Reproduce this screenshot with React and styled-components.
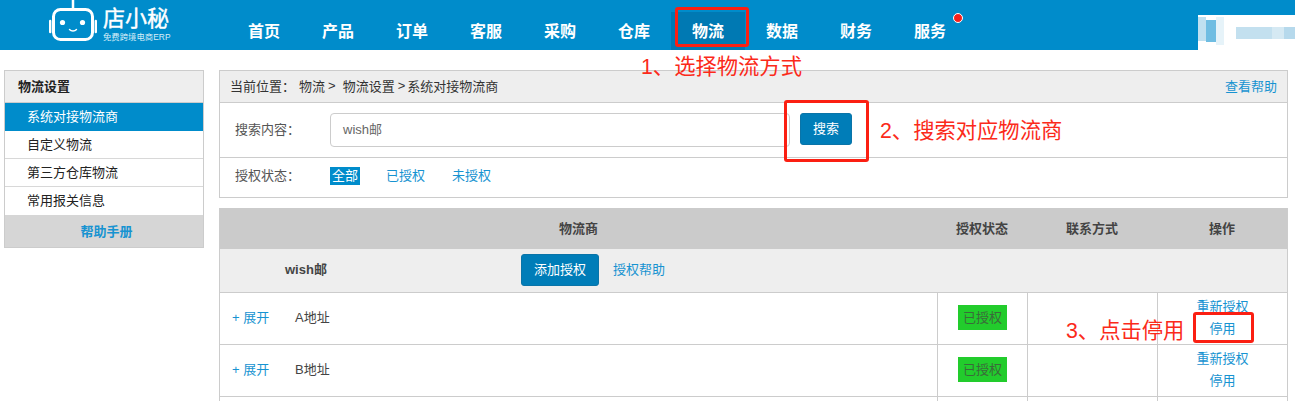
import React from "react";
import styled, { createGlobalStyle } from "styled-components";

const Global = createGlobalStyle`
  html, body { margin: 0; padding: 0; background: #fff; }
  body {
    width: 1295px; height: 401px; overflow: hidden; position: relative;
    font-family: "Liberation Sans", "Noto Sans CJK SC", sans-serif;
    font-size: 13px; color: #444;
  }
  * { box-sizing: border-box; }
`;

const BLUE = "#008ccb";
const LINK = "#1793d1";
const LINE = "#cccccc";

const Page = styled.div`position: relative; width: 1295px; height: 401px; overflow: hidden;`;

const Header = styled.header`
  height: 50px; background: ${BLUE}; display: flex; align-items: flex-end; position: relative;
`;
const Logo = styled.div`
  width: 227px; height: 50px; padding-left: 49px; display: flex; gap: 6px; flex-shrink: 0;
`;
const LogoText = styled.div`display: flex; flex-direction: column; color: #fff; width: 70px;`;
const LogoName = styled.span`
  font-size: 22px; font-weight: 400; line-height: 24px; margin-top: 7px; white-space: nowrap;
  -webkit-text-stroke: 0.4px #fff;
`;
const LogoSub = styled.span`font-size: 8.4px; line-height: 10px; margin-top: 1px; white-space: nowrap; color: #d8eef8;`;

const Nav = styled.nav`display: flex; height: 38px;`;
const NavItem = styled.a`
  width: 74px; height: 38px; display: flex; align-items: center; justify-content: center; padding-bottom: 3px;
  color: #fff; font-size: 16px; font-weight: 700; position: relative;
  background: ${p => (p.$active ? "#0079b3" : "transparent")};
`;
const Dot = styled.i`
  position: absolute; width: 10px; height: 10px; border-radius: 50%; background: #f5201c;
  border: 1px solid #fff; top: 1px; left: 60px;
`;
const UserBox = styled.div`
  position: absolute; left: 1198px; top: 15px; width: 97px; height: 35px; background: #fff; overflow: hidden;
`;
const Blur = styled.i`
  position: absolute; display: block; left: ${p => p.$x}px; top: ${p => p.$y}px;
  width: ${p => p.$w}px; height: ${p => p.$h}px; background: ${p => p.$c};
`;

const Body = styled.main`display: flex; align-items: flex-start; gap: 15px; padding: 20px 7px 0 4px;`;

const Side = styled.aside`width: 200px; border: 1px solid ${LINE}; flex-shrink: 0;`;
const SideTitle = styled.div`
  height: 32px; background: #eee; border-bottom: 1px solid ${LINE}; padding: 0 0 3px 13px;
  display: flex; align-items: center; font-weight: 700; color: #222;
`;
const SideItem = styled.div`
  height: 28px; padding: 0 0 3px 22px; display: flex; align-items: center;
  color: ${p => (p.$active ? "#fff" : "#222")};
  background: ${p => (p.$active ? BLUE : "#fff")};
  border-bottom: ${p => (p.$last || p.$active ? "none" : "1px solid #d8d8d8")};
`;
const SideHelp = styled.div`
  height: 32px; background: #d6d6d6; color: ${LINK}; font-weight: 700;
  display: flex; align-items: center; justify-content: center; padding: 0 0 2px 5px;
`;

const Content = styled.section`width: 1069px; display: flex; flex-direction: column; gap: 10px;`;
const Panel = styled.div`border: 1px solid ${LINE};`;
const Crumbs = styled.div`
  height: 32px; background: #eee; border-bottom: 1px solid ${LINE};
  display: flex; align-items: center; justify-content: space-between; padding: 0 10px 2px 10px; color: #333;
`;
const Trail = styled.div`display: flex; align-items: center;`;
const Gap = styled.span`margin-right: ${p => p.$r}px;`;
const Link = styled.a`color: ${LINK};`;
const SearchRow = styled.div`
  height: 55px; display: flex; align-items: center; border-bottom: 1px solid ${LINE}; padding-left: 15px;
`;
const Label = styled.span`width: 95px; color: #555; flex-shrink: 0; margin-bottom: 3px;`;
const Input = styled.div`
  width: 460px; height: 34px; border: 1px solid ${LINE}; border-radius: 4px; margin-right: 10px;
  display: flex; align-items: center; padding: 0 0 3px 12px; color: #666;
`;
const Button = styled.button`
  height: ${p => p.$h}px; width: ${p => p.$w}px; background: #007db8; border: 1px solid #0a74a8;
  border-radius: 3px; color: #fff; font: inherit; padding: 0 0 3px; margin-top: ${p => p.$up || 0}px;
`;
const StatusRow = styled.div`height: 39px; display: flex; align-items: center; padding: 0 0 3px 15px;`;
const Filter = styled.a`
  margin-right: ${p => p.$r}px; color: ${p => (p.$on ? "#fff" : LINK)};
  background: ${p => (p.$on ? BLUE : "transparent")}; padding: 0 ${p => (p.$on ? 2 : 0)}px; line-height: 18px;
`;

const Table = styled.div`border-left: 1px solid ${LINE}; border-right: 1px solid ${LINE};`;
const Row = styled.div`
  display: grid; grid-template-columns: 717px 90px 130px 130px; height: ${p => p.$h}px;
  background: ${p => p.$bg || "#fff"}; border-bottom: ${p => (p.$line ? `1px solid ${LINE}` : "none")};
`;
const HeadCell = styled.div`
  display: flex; align-items: center; justify-content: center; font-weight: 700; color: #444; padding-bottom: 3px;
`;
const Cell = styled.div`
  display: flex; align-items: center; justify-content: center; padding-bottom: 2px;
  border-left: ${p => (p.$first ? "none" : `1px solid ${LINE}`)};
`;
const NameCell = styled(Cell)`justify-content: flex-start; padding: 0 0 4px 12px;`;
const Expand = styled(Link)`width: 63px;`;
const Vendor = styled.div`
  height: 44px; background: #eee; border-bottom: 1px solid ${LINE}; display: flex; align-items: center;
`;
const VendorName = styled.strong`width: 301px; padding: 0 0 4px 65px; color: #444;`;
const HelpLink = styled(Link)`margin-left: 14px; padding-bottom: 4px;`;
const Badge = styled.span`
  width: 49px; height: 25px; background: #22cc2c; color: #3a6b3a; display: flex; align-items: center; justify-content: center; padding-bottom: 2px;
`;
const Ops = styled.div`
  display: flex; flex-direction: column; align-items: center; justify-content: center; gap: 4px; line-height: 18px; color: ${LINK};
`;

const RedBox = styled.div`
  position: absolute; left: ${p => p.$x}px; top: ${p => p.$y}px; width: ${p => p.$w}px; height: ${p => p.$h}px;
  border: 3px solid #fb1f12; border-radius: 3px;
`;
const Note = styled.div`
  position: absolute; left: ${p => p.$x}px; top: ${p => p.$y}px; color: #fb2a1a;
  font-size: 21.3px; line-height: 26px; white-space: nowrap;
`;

const Robot = () => (
  <svg width="48" height="44" viewBox="0 0 48 44" fill="none" stroke="#fff" strokeLinecap="round">
    <line x1="24" y1="0" x2="24" y2="8" strokeWidth="2.5" />
    <rect x="4.5" y="9.5" width="39" height="30" rx="7" strokeWidth="3" />
    <path d="M1.2 21v11M46.8 21v11" strokeWidth="2.4" />
    <circle cx="13.5" cy="22.5" r="2.6" fill="#fff" stroke="none" />
    <circle cx="33.5" cy="22.5" r="2.6" fill="#fff" stroke="none" />
    <path d="M20.5 29.5c1.8 2 5.2 2 7 0" strokeWidth="1.4" />
  </svg>
);

const navItems = ["首页", "产品", "订单", "客服", "采购", "仓库", "物流", "数据", "财务", "服务"];
const sideItems = ["系统对接物流商", "自定义物流", "第三方仓库物流", "常用报关信息"];

const DataRow = ({ name }) => (
  <Row $h={52} $line>
    <NameCell $first>
      <Expand>+ 展开</Expand>
      <span>{name}</span>
    </NameCell>
    <Cell><Badge>已授权</Badge></Cell>
    <Cell />
    <Cell>
      <Ops>
        <a>重新授权</a>
        <a>停用</a>
      </Ops>
    </Cell>
  </Row>
);

export default function App() {
  return (
    <Page>
      <Global />
      <Header>
        <Logo>
          <Robot />
          <LogoText>
            <LogoName>店小秘</LogoName>
            <LogoSub>免费跨境电商ERP</LogoSub>
          </LogoText>
        </Logo>
        <Nav>
          {navItems.map(n => (
            <NavItem key={n} $active={n === "物流"}>
              {n}
              {n === "服务" && <Dot />}
            </NavItem>
          ))}
        </Nav>
        <UserBox>
          <Blur $x={0} $y={2} $w={8} $h={24} $c="#bfe0f0" />
          <Blur $x={8} $y={5} $w={10} $h={22} $c="#6fbde2" />
          <Blur $x={18} $y={2} $w={8} $h={28} $c="#e6f3f9" />
          <Blur $x={38} $y={12} $w={36} $h={12} $c="#c3e0ef" />
          <Blur $x={74} $y={12} $w={12} $h={12} $c="#d5e9f3" />
          <Blur $x={86} $y={12} $w={11} $h={12} $c="#b6d9ec" />
        </UserBox>
      </Header>

      <Body>
        <Side>
          <SideTitle>物流设置</SideTitle>
          {sideItems.map((s, i) => (
            <SideItem key={s} $active={i === 0} $last={i === 3}>{s}</SideItem>
          ))}
          <SideHelp>帮助手册</SideHelp>
        </Side>

        <Content>
          <Panel>
            <Crumbs>
              <Trail>
                <Gap $r={4}>当前位置：</Gap>
                <Gap $r={3}>物流</Gap>
                <Gap $r={7}>&gt;</Gap>
                <Gap $r={3}>物流设置</Gap>
                <Gap $r={2}>&gt;</Gap>
                <span>系统对接物流商</span>
              </Trail>
              <Link>查看帮助</Link>
            </Crumbs>
            <SearchRow>
              <Label>搜索内容：</Label>
              <Input>wish邮</Input>
              <Button $w={52} $h={32} $up={-3}>搜索</Button>
            </SearchRow>
            <StatusRow>
              <Label>授权状态：</Label>
              <Filter $on $r={26}>全部</Filter>
              <Filter $r={27}>已授权</Filter>
              <Filter $r={0}>未授权</Filter>
            </StatusRow>
          </Panel>

          <Table>
            <Row $h={41} $bg="#cbcbcb">
              <HeadCell>物流商</HeadCell>
              <HeadCell>授权状态</HeadCell>
              <HeadCell>联系方式</HeadCell>
              <HeadCell>操作</HeadCell>
            </Row>
            <Vendor>
              <VendorName>wish邮</VendorName>
              <Button $w={78} $h={32} $up={-1}>添加授权</Button>
              <HelpLink>授权帮助</HelpLink>
            </Vendor>
            <DataRow name="A地址" />
            <DataRow name="B地址" />
            <Row $h={4}>
              <Cell $first /><Cell /><Cell /><Cell />
            </Row>
          </Table>
        </Content>
      </Body>

      <RedBox $x={675} $y={7} $w={74} $h={40} />
      <RedBox $x={784} $y={100} $w={85} $h={62} />
      <RedBox $x={1193} $y={312} $w={61} $h={31} />
      <Note $x={641} $y={54}>1、选择物流方式</Note>
      <Note $x={880} $y={118}>2、搜索对应物流商</Note>
      <Note $x={1066} $y={318}>3、点击停用</Note>
    </Page>
  );
}
